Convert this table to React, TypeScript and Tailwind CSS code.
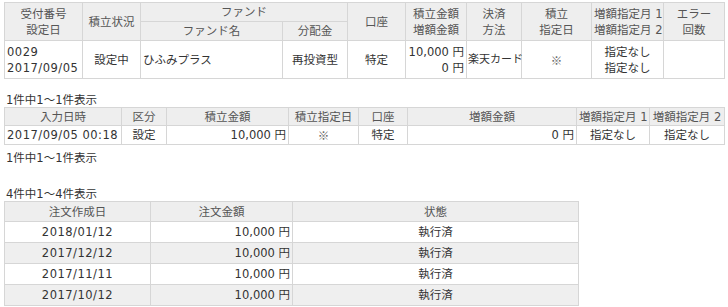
import React from "react";

const th = "border border-[#d6d6d6] bg-[#eeeeee] font-normal text-[#555] text-center align-middle whitespace-nowrap px-[2px] py-0";
const td = "border border-[#d6d6d6] align-middle whitespace-nowrap px-[2px] py-0";
const num = "tracking-[0.5px]";
const cjk = "font-['Noto_Sans_CJK_JP',sans-serif]";

const orders = [
  { date: "2018/01/12", amount: "10,000 円", status: "執行済" },
  { date: "2017/12/12", amount: "10,000 円", status: "執行済" },
  { date: "2017/11/11", amount: "10,000 円", status: "執行済" },
  { date: "2017/10/12", amount: "10,000 円", status: "執行済" },
];

const App: React.FC = () => {
  return (
    <div className="min-h-[307px] bg-white pt-[2px] pl-[4px] text-[11.5px] leading-[16px] text-[#333] font-['DejaVu_Sans','Noto_Sans_CJK_JP',sans-serif]">
      {/* Settings table */}
      <table className="w-[720px] table-fixed border-collapse">
        <colgroup>
          <col className="w-[78px]" />
          <col className="w-[58px]" />
          <col className="w-[142px]" />
          <col className="w-[65px]" />
          <col className="w-[58px]" />
          <col className="w-[61px]" />
          <col className="w-[55px]" />
          <col className="w-[70px]" />
          <col className="w-[72px]" />
          <col className="w-[61px]" />
        </colgroup>
        <thead>
          <tr className="h-[19px]">
            <th rowSpan={2} className={th}>
              受付番号
              <br />
              設定日
            </th>
            <th rowSpan={2} className={th}>積立状況</th>
            <th colSpan={2} className={th}>ファンド</th>
            <th rowSpan={2} className={th}>口座</th>
            <th rowSpan={2} className={th}>
              積立金額
              <br />
              増額金額
            </th>
            <th rowSpan={2} className={th}>
              決済
              <br />
              方法
            </th>
            <th rowSpan={2} className={th}>
              積立
              <br />
              指定日
            </th>
            <th rowSpan={2} className={th}>
              増額指定月 1
              <br />
              増額指定月 2
            </th>
            <th rowSpan={2} className={th}>
              エラー
              <br />
              回数
            </th>
          </tr>
          <tr className="h-[19px]">
            <th className={th}>ファンド名</th>
            <th className={th}>分配金</th>
          </tr>
        </thead>
        <tbody>
          <tr className="h-[38px]">
            <td className={`${td} ${num} text-left`}>
              0029
              <br />
              2017/09/05
            </td>
            <td className={`${td} text-center`}>設定中</td>
            <td className={`${td} text-left`}>ひふみプラス</td>
            <td className={`${td} text-center`}>再投資型</td>
            <td className={`${td} text-center`}>特定</td>
            <td className={`${td} text-right`}>
              10,000 円
              <br />0 円
            </td>
            <td className={`${td} text-left text-[11px] pl-[1px]`}>楽天カード</td>
            <td className={`${td} ${cjk} text-center text-[#666]`}>※</td>
            <td className={`${td} text-center`}>
              指定なし
              <br />
              指定なし
            </td>
            <td className={td}></td>
          </tr>
        </tbody>
      </table>

      <div className="mt-[14px] pl-[2px] leading-[14px]">1件中1〜1件表示</div>

      {/* History table */}
      <table className="w-[720px] table-fixed border-collapse">
        <colgroup>
          <col className="w-[117px]" />
          <col className="w-[45px]" />
          <col className="w-[122px]" />
          <col className="w-[70px]" />
          <col className="w-[49px]" />
          <col className="w-[169px]" />
          <col className="w-[73px]" />
          <col className="w-[75px]" />
        </colgroup>
        <thead>
          <tr className="h-[18px]">
            <th className={th}>入力日時</th>
            <th className={th}>区分</th>
            <th className={th}>積立金額</th>
            <th className={th}>積立指定日</th>
            <th className={th}>口座</th>
            <th className={th}>増額金額</th>
            <th className={th}>増額指定月 1</th>
            <th className={th}>増額指定月 2</th>
          </tr>
        </thead>
        <tbody>
          <tr className="h-[19px]">
            <td className={`${td} ${num} text-left`}>2017/09/05 00:18</td>
            <td className={`${td} text-center`}>設定</td>
            <td className={`${td} text-right`}>10,000 円</td>
            <td className={`${td} ${cjk} text-center text-[#666]`}>※</td>
            <td className={`${td} text-center`}>特定</td>
            <td className={`${td} text-right`}>0 円</td>
            <td className={`${td} text-center`}>指定なし</td>
            <td className={`${td} text-center`}>指定なし</td>
          </tr>
        </tbody>
      </table>

      <div className="mt-[6px] pl-[2px] leading-[14px]">1件中1〜1件表示</div>

      <div className="mt-[22px] pl-[2px] leading-[14px]">4件中1〜4件表示</div>

      {/* Orders table */}
      <table className="w-[574px] table-fixed border-collapse">
        <colgroup>
          <col className="w-[146px]" />
          <col className="w-[142px]" />
          <col className="w-[286px]" />
        </colgroup>
        <thead>
          <tr className="h-[20px]">
            <th className={`${th} bg-[#e1ebf3]`}>注文作成日</th>
            <th className={`${th} bg-[#e1ebf3]`}>注文金額</th>
            <th className={`${th} bg-[#e1ebf3]`}>状態</th>
          </tr>
        </thead>
        <tbody>
          {orders.map((o, i) => (
            <tr key={o.date} className={`h-[21px] ${i % 2 === 1 ? "bg-[#efefef]" : "bg-white"}`}>
              <td className={`${td} ${num} text-center`}>{o.date}</td>
              <td className={`${td} text-right`}>{o.amount}</td>
              <td className={`${td} text-center`}>{o.status}</td>
            </tr>
          ))}
        </tbody>
      </table>
    </div>
  );
};

export default App;
